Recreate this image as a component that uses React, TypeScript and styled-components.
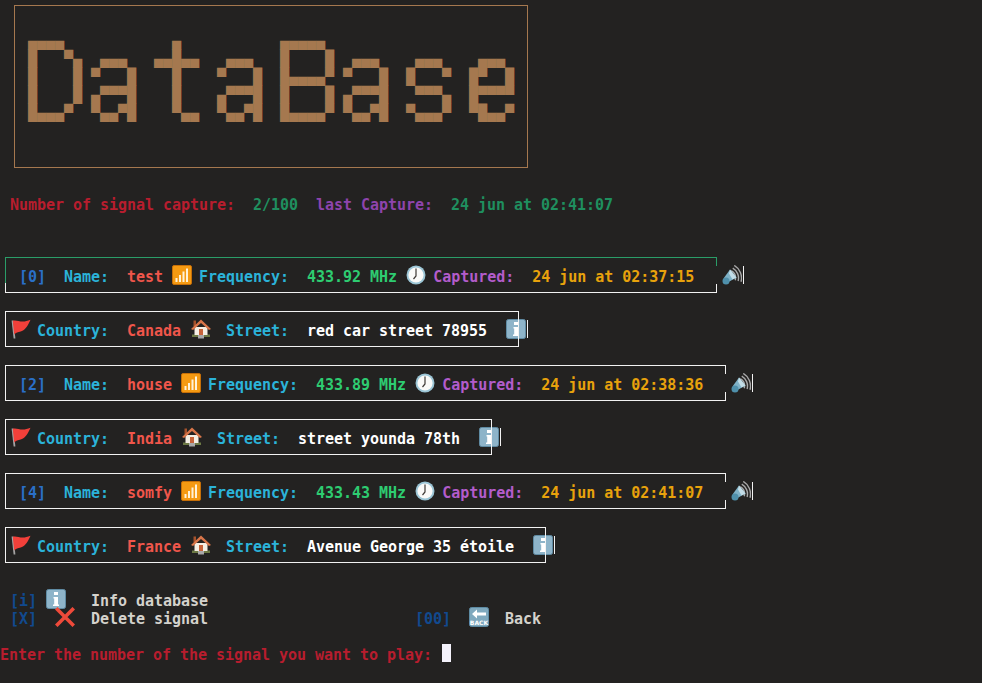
import React from 'react';
import styled, { createGlobalStyle } from 'styled-components';

const GlobalStyle = createGlobalStyle`
  html, body {
    margin: 0;
    padding: 0;
    background: #232221;
  }
`;

const Terminal = styled.div`
  width: 982px;
  height: 683px;
  overflow: hidden;
  box-sizing: border-box;
  padding-top: 5px;
  background: #232221;
  color: #d4d4d4;
  font-family: 'DejaVu Sans Mono', 'Liberation Mono', monospace;
  font-size: 15px;
  font-weight: 700;
  letter-spacing: -0.03px;
  line-height: 18px;
  white-space: pre;
`;

const LogoFrame = styled.div`
  box-sizing: border-box;
  width: 514px;
  height: 163px;
  margin-left: 14px;
  padding: 26px 0 0 13px;
  border: 1px solid #a5784f;
`;

const LogoRow = styled.div`
  height: 18px;
  color: #a5784f;
  font-weight: 400;
  transform: scaleY(1.035);
`;

const Line = styled.div<{ $top?: number; $left?: number }>`
  display: flex;
  align-items: center;
  height: 18px;
  margin-top: ${(p) => p.$top ?? 0}px;
  padding-left: ${(p) => p.$left ?? 0}px;
`;

const Ink = styled.span<{ $c: string }>`
  padding-top: 4px;
  color: ${(p) => p.$c};
`;

const Records = styled.div`
  display: flex;
  flex-direction: column;
  gap: 18px;
  margin-top: 45px;
  padding-left: 5px;
`;

const Record = styled.div`
  display: flex;
  align-items: center;
  height: 36px;
`;

const Box = styled.div<{ $w: number; $pad: number; $gap?: boolean; $first?: boolean }>`
  position: relative;
  display: flex;
  align-items: center;
  box-sizing: border-box;
  width: ${(p) => p.$w}px;
  height: 36px;
  padding-left: ${(p) => p.$pad}px;
  border: 1px solid #f2f2f2;
  ${(p) => (p.$gap ? 'border-right-color: transparent;' : '')}
  ${(p) =>
    p.$first
      ? `
    border-top-color: #2a9d68;
    border-left-color: #2a9d68;
    &::before {
      content: '';
      position: absolute;
      left: -1px;
      bottom: -1px;
      width: 1px;
      height: 10px;
      background: #f2f2f2;
    }
  `
      : ''}
  ${(p) =>
    p.$gap
      ? `
    &::after {
      content: '';
      position: absolute;
      right: -1px;
      top: -1px;
      bottom: -1px;
      width: 1px;
      background: linear-gradient(${p.$first ? '#2a9d68' : '#f2f2f2'} 0 9px, transparent 9px 27px, #f2f2f2 27px);
    }
  `
      : ''}
`;

const Slot = styled.span<{ $w: number }>`
  display: inline-flex;
  flex: none;
  align-items: center;
  width: ${(p) => p.$w}px;
`;

const Bar = styled.span<{ $left: number }>`
  flex: none;
  width: 1px;
  height: 18px;
  margin-left: ${(p) => p.$left}px;
  background: #f2f2f2;
`;

const Trail = styled.span<{ $left: number }>`
  display: inline-flex;
  flex: none;
  margin-left: ${(p) => p.$left}px;
`;

const Cursor = styled.span`
  flex: none;
  width: 9px;
  height: 18px;
  margin-left: 1px;
  background: #f4f2fb;
`;

const Menu = styled.div`
  margin-top: 27px;
`;

const BackGroup = styled.span`
  display: inline-flex;
  align-items: center;
  margin-left: 207px;
`;

const Signal = () => (
  <svg width="20" height="20" viewBox="0 0 20 20">
    <rect x="0.5" y="0.5" width="19" height="19" rx="1.5" fill="#f59a12" stroke="#c66f08" />
    <rect x="3.5" y="13" width="2" height="4" fill="#fff2d8" />
    <rect x="7" y="10" width="2" height="7" fill="#fff2d8" />
    <rect x="10.5" y="6.5" width="2" height="10.5" fill="#fff2d8" />
    <rect x="14" y="3.5" width="2" height="13.5" fill="#fff2d8" />
  </svg>
);

const Clock = () => (
  <svg width="20" height="20" viewBox="0 0 20 20">
    <circle cx="10" cy="10" r="9.5" fill="#9cc6d6" />
    <circle cx="10" cy="10" r="7.6" fill="#fafaf8" />
    <path d="M10 3.5V11L7.5 14" fill="none" stroke="#3f3a36" strokeWidth="1.2" />
  </svg>
);

const Speaker = () => (
  <svg width="20" height="20" viewBox="0 0 20 20">
    <path
      d="M9.25 5.64A8.5 8.5 0 0 1 13.2 15.2M10.75 3.04A11.5 11.5 0 0 1 16.1 16M12.25 .44A14.5 14.5 0 0 1 19 16.75"
      fill="none"
      stroke="#a8a8a8"
      strokeWidth="1.4"
    />
    <path d="M1.5 13.500 8 4.500 14.500 12.500 6.500 17z" fill="#7fb2c7" />
    <path d="M8 4.500 14.500 12.500 10.500 14.500 7 8.500z" fill="#c3dde7" />
    <circle cx="4" cy="16" r="3.500" fill="#4f90ab" />
  </svg>
);

const Flag = () => (
  <svg width="21" height="20" viewBox="0 0 21 20">
    <path d="M2.500 1.500 4.500 19.500" stroke="#a3a3a3" strokeWidth="1.800" fill="none" />
    <path d="M2.800 1.800C7 0 11 5 20.500 .8 18 6 16 10.500 12 12 9 13.200 6.500 13 4.200 15.500z" fill="#f2403a" />
  </svg>
);

const House = () => (
  <svg width="21" height="20" viewBox="-1 0 21 20">
    <rect x="2.500" y="1.500" width="2.500" height="6" fill="#a5522c" />
    <rect x="1" y="15.500" width="18" height="2.500" fill="#6d7a45" />
    <path d="M3.500 8H16.500V16H3.500z" fill="#f5efe4" />
    <path d="M0 10 10 0.500 20 10 18 11 10 4 2 11z" fill="#d9764a" />
    <path d="M8 10H12V16H8z" fill="#c7633a" />
    <rect x="7" y="16" width="6" height="3.500" fill="#a8a8a8" />
  </svg>
);

const Info = () => (
  <svg width="20" height="20" viewBox="0 0 20 20">
    <rect x="0.5" y="0.5" width="19" height="19" rx="2" fill="#8eb4c9" stroke="#5f8ba3" />
    <rect x="8" y="3" width="4" height="3" fill="#fff" />
    <path d="M7.500 8H12V15.500H13V17H7V15.500H8.200V9.500H7.500z" fill="#fff" />
  </svg>
);

const Cross = () => (
  <svg width="20" height="20" viewBox="0 0 20 20">
    <path d="M2.500 2.500 17.500 17.500M17.500 2.500 2.500 17.500" stroke="#ef4a3a" strokeWidth="3.600" strokeLinecap="square" fill="none" />
  </svg>
);

const BackSign = () => (
  <svg width="20" height="20" viewBox="0 0 20 20">
    <rect x="0.500" y="0.500" width="19" height="19" rx="2" fill="#7fa9be" stroke="#5d8ba3" />
    <path d="M3 7 8 2.500V5.500H17V8.500H8V11.500z" fill="#fff" />
    <text x="10" y="17.500" textAnchor="middle" fontFamily="'DejaVu Sans', sans-serif" fontSize="6" fontWeight="700" letterSpacing="0" fill="#fff">
      BACK
    </text>
  </svg>
);

const GLYPHS: Record<string, string[]> = {
  D: ['####..', '#...#.', '#....#', '#....#', '#....#', '#....#', '#....#', '#...#.', '####..'],
  a: ['.....', '.....', '.###.', '#...#', '....#', '.####', '#...#', '#..##', '.##.#'],
  t: ['..#..', '..#..', '#####', '..#..', '..#..', '..#..', '..#..', '..#..', '...##'],
  B: ['#####.', '#....#', '#....#', '#....#', '#####.', '#....#', '#....#', '#....#', '#####.'],
  s: ['.....', '.....', '.###.', '#...#', '#....', '.###.', '....#', '#...#', '.###.'],
  e: ['.....', '.....', '.###.', '##..#', '#...#', '#####', '#....', '##..#', '.###.'],
};

// letter + blank columns after it
const WORD: [string, number][] = [['D', 1], ['a', 2], ['t', 2], ['a', 2], ['B', 1], ['a', 2], ['s', 2], ['e', 0]];

const pixelRows = Array.from({ length: 9 }, (_, r) =>
  WORD.map(([ch, gap]) => GLYPHS[ch][r] + '.'.repeat(gap)).join(''),
);

// two pixel rows make one terminal row of half blocks
const halfBlocks = (top: string, bottom: string) =>
  Array.from(bottom, (b, i) => {
    const t = top[i] === '#';
    if (t && b === '#') return '█';
    if (t) return '▀';
    return b === '#' ? '▄' : ' ';
  }).join('');

const blank = ' '.repeat(54);
const logoRows = [
  halfBlocks(blank, pixelRows[0]),
  halfBlocks(pixelRows[1], pixelRows[2]),
  halfBlocks(pixelRows[3], pixelRows[4]),
  halfBlocks(pixelRows[5], pixelRows[6]),
  halfBlocks(pixelRows[7], pixelRows[8]),
];

const CYAN = '#2bb3d9';
const CORAL = '#f0564b';
const MENU_BLUE = '#114a8f';
const MENU_TEXT = '#d4d2cc';

const SIGNALS = [
  { id: 0, name: 'test', freq: '433.92 MHz', at: '24 jun at 02:37:15', w: 712 },
  { id: 2, name: 'house', freq: '433.89 MHz', at: '24 jun at 02:38:36', w: 721 },
  { id: 4, name: 'somfy', freq: '433.43 MHz', at: '24 jun at 02:41:07', w: 721 },
];

const PLACES = [
  { country: 'Canada', street: 'red car street 78955', w: 514 },
  { country: 'India', street: 'street younda 78th', w: 487 },
  { country: 'France', street: 'Avenue George 35 étoile', w: 541 },
];

const SignalRecord = ({ s, first }: { s: (typeof SIGNALS)[number]; first?: boolean }) => (
  <Record>
    <Box $w={s.w} $pad={13} $gap $first={first}>
      <Ink $c="#2a70c8">[{s.id}]</Ink>
      <Ink $c={CYAN}>{'  Name:  '}</Ink>
      <Ink $c={CORAL}>{s.name} </Ink>
      <Slot $w={27}><Signal /></Slot>
      <Ink $c={CYAN}>{'Frequency:  '}</Ink>
      <Ink $c="#2ecc71">{s.freq} </Ink>
      <Slot $w={27}><Clock /></Slot>
      <Ink $c="#b35ccb">{'Captured:  '}</Ink>
      <Ink $c="#e8a20c">{s.at}</Ink>
    </Box>
    <Trail $left={5}><Speaker /></Trail>
    <Bar $left={1} />
  </Record>
);

const PlaceRecord = ({ p }: { p: (typeof PLACES)[number] }) => (
  <Record>
    <Box $w={p.w} $pad={4}>
      <Slot $w={27}><Flag /></Slot>
      <Ink $c={CYAN}>{'Country:  '}</Ink>
      <Ink $c={CORAL}>{p.country} </Ink>
      <Slot $w={36}><House /></Slot>
      <Ink $c={CYAN}>{'Street:  '}</Ink>
      <Ink $c="#ffffff">{p.street}</Ink>
    </Box>
    <Trail $left={-13}><Info /></Trail>
    <Bar $left={1} />
  </Record>
);

export default function App() {
  return (
    <>
      <GlobalStyle />
      <Terminal>
        <LogoFrame>
          {logoRows.map((row, i) => (
            <LogoRow key={i}>{row}</LogoRow>
          ))}
        </LogoFrame>
        <Line $top={26} $left={10}>
          <Ink $c="#b81d2e">{'Number of signal capture:  '}</Ink>
          <Ink $c="#1f8f5f">{'2/100  '}</Ink>
          <Ink $c="#8e44ad">{'last Capture:  '}</Ink>
          <Ink $c="#1f8f5f">24 jun at 02:41:07</Ink>
        </Line>
        <Records>
          <SignalRecord s={SIGNALS[0]} first />
          <PlaceRecord p={PLACES[0]} />
          <SignalRecord s={SIGNALS[1]} />
          <PlaceRecord p={PLACES[1]} />
          <SignalRecord s={SIGNALS[2]} />
          <PlaceRecord p={PLACES[2]} />
        </Records>
        <Menu>
          <Line $left={10}>
            <Ink $c={MENU_BLUE}>[i]</Ink>
            <Slot $w={54}>&nbsp;<Info /></Slot>
            <Ink $c={MENU_TEXT}>Info database</Ink>
          </Line>
          <Line $left={10}>
            <Ink $c={MENU_BLUE}>[X]</Ink>
            <Slot $w={54}>&nbsp;&nbsp;<Cross /></Slot>
            <Ink $c={MENU_TEXT}>Delete signal</Ink>
            <BackGroup>
              <Ink $c={MENU_BLUE}>[00]</Ink>
              <Slot $w={54}>&nbsp;&nbsp;<BackSign /></Slot>
              <Ink $c={MENU_TEXT}>Back</Ink>
            </BackGroup>
          </Line>
        </Menu>
        <Line $top={18}>
          <Ink $c="#b81d2e">{'Enter the number of the signal you want to play: '}</Ink>
          <Cursor />
        </Line>
      </Terminal>
    </>
  );
}
